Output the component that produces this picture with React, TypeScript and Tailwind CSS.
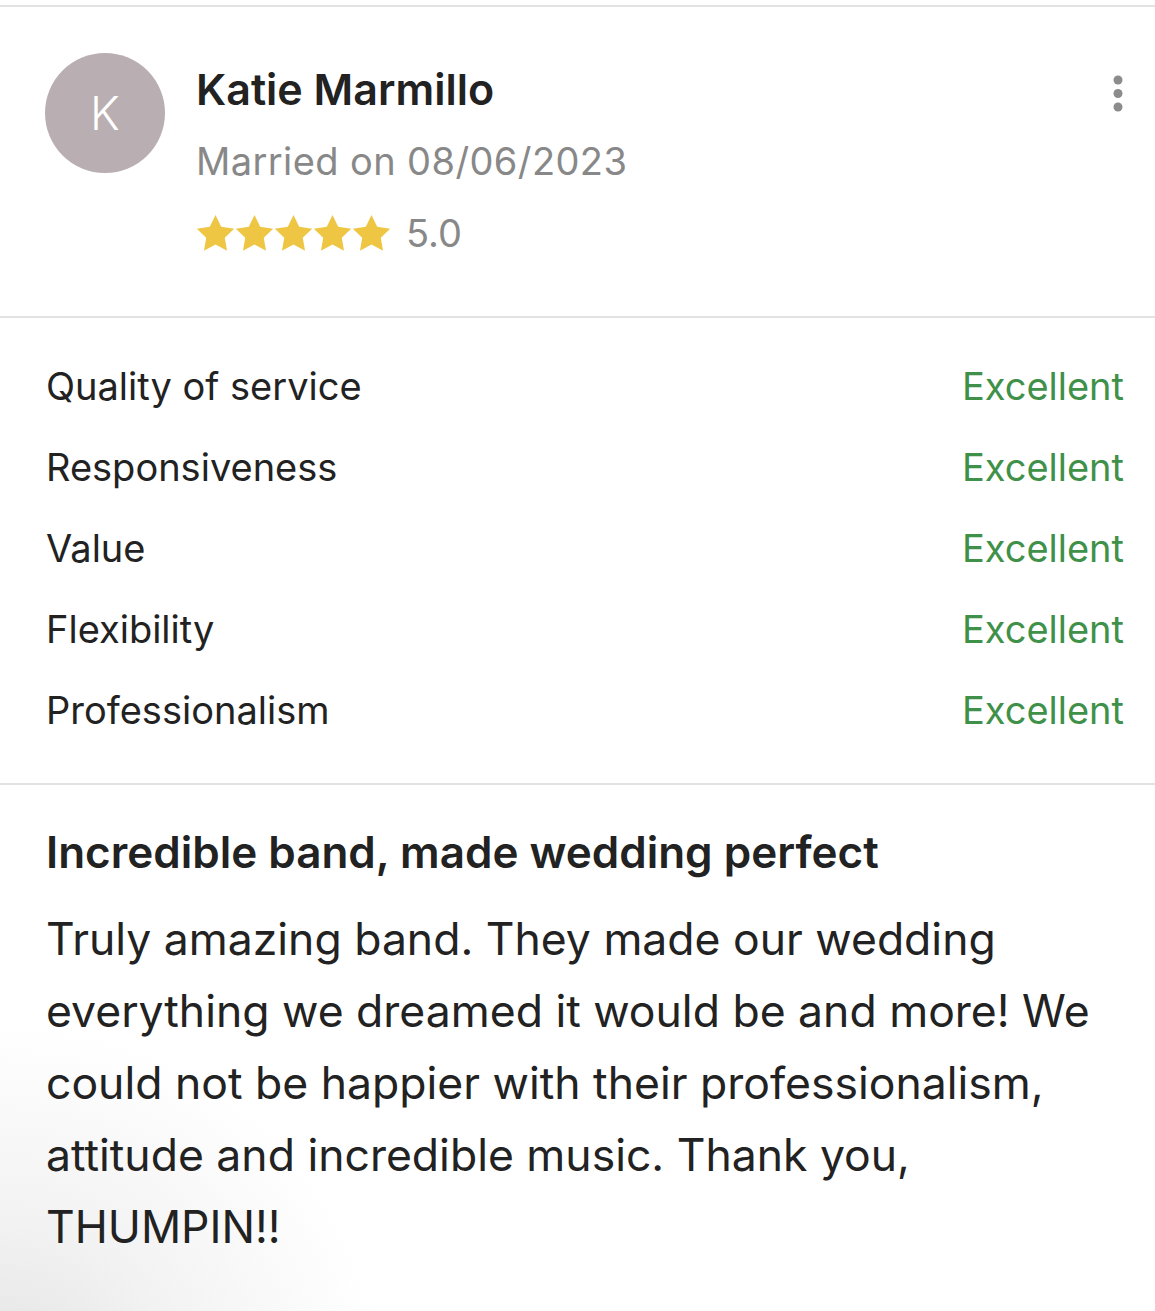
const ratings = ['Quality of service', 'Responsiveness', 'Value', 'Flexibility', 'Professionalism'];

const bodyLines = [
  'Truly amazing band. They made our wedding',
  'everything we dreamed it would be and more! We',
  'could not be happier with their professionalism,',
  'attitude and incredible music. Thank you,',
  'THUMPIN!!',
];

function Star() {
  return (
    <svg viewBox="0 0 24 24" className="w-[39px] h-[39px]" fill="#eec643">
      <path d="M12 0.6l3.5 7.3 8 1.1-5.8 5.6 1.4 8L12 18.8l-7.1 3.8 1.4-8L.5 9l8-1.1z" />
    </svg>
  );
}

function Dots() {
  return (
    <svg viewBox="0 0 12 40" className="w-[12px] h-[40px]" fill="#8c8c8c">
      <circle cx="6" cy="6" r="4.5" />
      <circle cx="6" cy="19.5" r="4.5" />
      <circle cx="6" cy="33" r="4.5" />
    </svg>
  );
}

export default function App() {
  return (
    <div className="w-[1155px] h-[1311px] bg-white overflow-hidden font-['Inter',sans-serif] text-[#222]">
      <div className="h-[5px]" />
      <div className="border-t-2 border-[#e2e2e2]" />

      {/* Reviewer header */}
      <div className="flex items-start pl-[45px] pr-[31px] pt-[46px] h-[311px] border-b-2 border-[#e2e2e2]">
        <div className="w-[120px] h-[120px] rounded-full bg-[#b9aeb2] flex items-center justify-center text-white text-[46px] font-light shrink-0">
          K
        </div>
        <div className="ml-[31px] flex-1">
          <div className="text-[43px] leading-[72px] font-semibold text-[#222]">Katie Marmillo</div>
          <div className="text-[38px] leading-[72px] tracking-[0.4px] text-[#888]">Married on 08/06/2023</div>
          <div className="flex items-center mt-[8px]">
            <div className="flex">
              <Star />
              <Star />
              <Star />
              <Star />
              <Star />
            </div>
            <span className="ml-[15px] text-[38px] text-[#888]">5.0</span>
          </div>
        </div>
        <div className="mt-[21px]">
          <Dots />
        </div>
      </div>

      {/* Ratings */}
      <div className="pl-[46px] pr-[31px] pt-[28px] pb-[32px] border-b-2 border-[#e2e2e2]">
        {ratings.map((r) => (
          <div key={r} className="flex justify-between items-center h-[81px] text-[38px]">
            <span>{r}</span>
            <span className="text-[#3f9149]">Excellent</span>
          </div>
        ))}
      </div>

      {/* Review text */}
      <div className="h-[600px] pl-[46px] pt-[34px] bg-[radial-gradient(ellipse_380px_360px_at_0%_100%,#e2e2e2_0%,#f2f2f2_45%,#ffffff_100%)]">
        <h2 className="text-[44px] leading-[66px] font-semibold text-[#222]">Incredible band, made wedding perfect</h2>
        <p className="mt-[18px] text-[44.5px] leading-[72px] text-[#222]">
          {bodyLines.map((l) => (
            <span key={l} className="block whitespace-nowrap">
              {l}
            </span>
          ))}
        </p>
      </div>
    </div>
  );
}
